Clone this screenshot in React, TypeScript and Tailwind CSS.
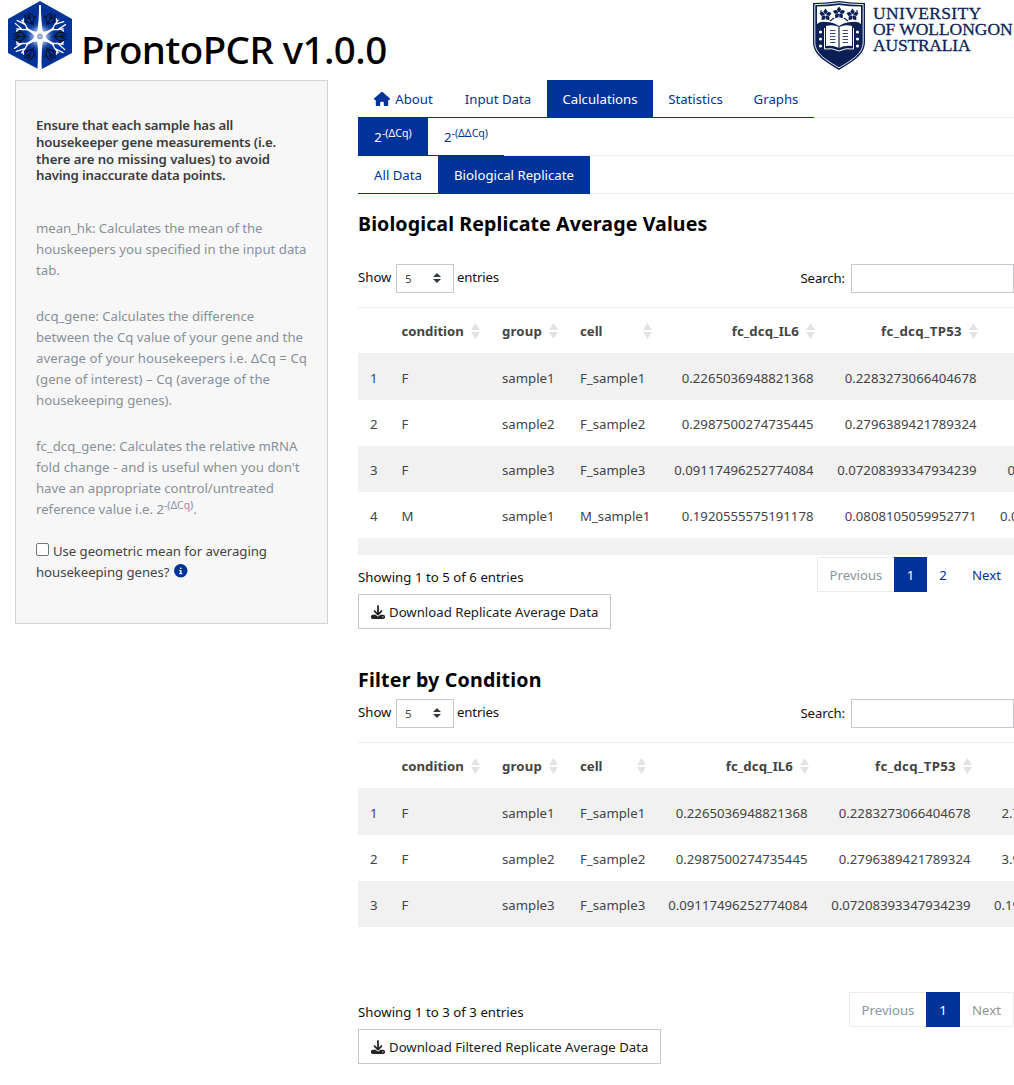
import React from "react";
import { FaHouse, FaDownload, FaCircleInfo } from "react-icons/fa6";

function HexLogo() {
  const dark = [30, 90, 150, 210, 270, 330];
  const white = [60, 120, 240, 300];
  return (
    <svg className="block h-[71px] w-[66px] shrink-0" viewBox="0 0 66 71">
      <defs>
        <radialGradient id="glow">
          <stop offset="0" stopColor="#c9d7f3" />
          <stop offset="0.5" stopColor="#6f90d3" />
          <stop offset="1" stopColor="#003399" stopOpacity="0" />
        </radialGradient>
      </defs>
      <path d="M33 1L65 19V53L33 70L1 53V19Z" fill="#003399" />
      {dark.map((a) => (
        <g key={a} transform={`translate(33 36.5) rotate(${a})`} fill="none" stroke="#06102f" strokeWidth="1.1">
          <path d="M0 -11V-26M0 -14L-4 -19V-24M0 -14L4 -19V-24M0 -20L-2.5 -24V-27M0 -20L2.5 -24V-27M-4 -19L-7 -20M4 -19L7 -20" />
        </g>
      ))}
      <circle cx="33" cy="36.5" r="16" fill="url(#glow)" />
      {white.map((a) => (
        <g key={a} transform={`translate(33 36.5) rotate(${a})`} fill="none" stroke="#fff" strokeWidth="1.3" strokeLinecap="round">
          <path d="M0 -3V-15" strokeWidth="2.4" />
          <path d="M0 -14L-3 -19L-5 -24M-3 -19L-1 -28M0 -14L3 -19L5 -24M3 -19L2.5 -28M-4 -22L-7 -23M4 -22L7 -23" />
        </g>
      ))}
      <g transform="translate(33 36.5)" fill="#fff">
        <path d="M-2.6 -6C-1.6 -14 -0.9 -22 -0.9 -31.5H0.9C0.9 -22 1.6 -14 2.6 -6Z" />
        <path d="M-2.6 5C-1.8 15 -2 26 -2.6 33.5L0 34.5L2 33C1 26 1.8 15 2.6 5Z" />
        <path d="M0 -10L3 -5L9 -5L5.5 0L9 5.5L3 5L0 11L-3 5L-9 5.5L-5.5 0L-9 -5L-3 -5Z" />
      </g>
      <circle cx="33" cy="36.5" r="2.4" fill="#a9bbe2" stroke="#7892cc" />
    </svg>
  );
}

function Flower({ x, y }: { x: number; y: number }) {
  return (
    <g transform={`translate(${x} ${y})`} fill="#0c1f55">
      {[0, 72, 144, 216, 288].map((a) => (
        <path key={a} d="M0 0L-2.2 -3.6L0 -6.4L2.2 -3.6Z" transform={`rotate(${a})`} />
      ))}
      <circle r="1" fill="#fff" />
    </g>
  );
}

function Shield() {
  return (
    <svg className="block h-[71px] w-[54px] shrink-0" viewBox="0 0 54 71">
      <path d="M1 3Q14 3 27 1Q40 3 53 3V42C53 55 40 62 27 70C14 62 1 55 1 42Z" fill="#0c1f55" />
      <path d="M2.8 4.6Q15 4.6 27 2.8Q39 4.6 51.2 4.6V42C51.2 54 39 60.5 27 67.8C15 60.5 2.8 54 2.8 42Z" fill="none" stroke="#fff" strokeWidth="0.9" />
      <path d="M5 6.5Q16 6.5 27 5Q38 6.5 49 6.5V24Q46 21 40 22Q33 22 27 26Q21 22 14 22Q8 21 5 24Z" fill="#fff" />
      <Flower x={13.5} y={15} />
      <Flower x={27} y={13} />
      <Flower x={40.5} y={15} />
      <path d="M9 13V10M18 21L22 18M45 13V10M36 21L32 18" stroke="#0c1f55" strokeWidth="1.2" />
      <path d="M14 26Q21 24 27 27Q33 24 40 26V46Q33 45 27 48Q21 45 14 46Z" fill="#fff" />
      <path d="M12.5 28V49Q20 47.5 27 51Q34 47.5 41.5 49V28" fill="none" stroke="#fff" strokeWidth="1" />
      <path d="M27 27V48" stroke="#0c1f55" strokeWidth="1.2" />
      <path d="M18 30.5H23.5M18 33.5H23.5M18 36.5H23.5M18 39.5H23.5M18 42.5H23.5M30.5 30.5H36M30.5 33.5H36M30.5 36.5H36M30.5 39.5H36M30.5 42.5H36" stroke="#0c1f55" strokeWidth="0.8" />
      <g fill="#fff">
        <circle cx="8.5" cy="32" r="1.6" /><circle cx="8.5" cy="39" r="1.6" /><circle cx="8.5" cy="46" r="1.6" />
        <circle cx="45.5" cy="32" r="1.6" /><circle cx="45.5" cy="39" r="1.6" /><circle cx="45.5" cy="46" r="1.6" />
      </g>
    </svg>
  );
}

function SortIcon() {
  return (
    <svg className="h-4 w-[9px] shrink-0" viewBox="0 0 9 16" fill="#e3e3e3">
      <path d="M4.5 0L9 7H0ZM4.5 16L0 9H9Z" />
    </svg>
  );
}

function Tab({ width, active, children }: { width: string; active?: boolean; children: React.ReactNode }) {
  return (
    <div className={`flex h-[38px] items-center justify-center whitespace-nowrap border-b border-[#003399] pt-[2px] ${width} ${active ? "bg-[#003399] text-white" : "text-[#003399]"}`}>
      {children}
    </div>
  );
}

function TableControls() {
  return (
    <div className="flex h-[29px] items-center">
      <span className="w-[38px] pb-[2px]">Show</span>
      <div className="flex h-[29px] w-[58px] items-center justify-between border border-[#c8c8cc] pl-2 pr-3 text-[11.5px] text-[#444]">
        <span>5</span>
        <svg className="mb-[2px] h-[10px] w-[8px]" viewBox="0 0 8 10" fill="#343a40"><path d="M4 0L8 4H0ZM4 10L0 6H8Z" /></svg>
      </div>
      <span className="ml-[3px] pb-[2px] tracking-[-0.15px]">entries</span>
      <span className="ml-auto mr-[6px] tracking-[-0.1px]">Search:</span>
      <div className="h-[29px] w-[163px] border border-[#c8c8cc]" />
    </div>
  );
}

type Row = [string, string, string, string, string, string, string];

function DataTable({ cols, rows, height }: { cols: string; rows: Row[]; height: string }) {
  return (
    <div className={`overflow-hidden border-t border-[#ececec] text-[#444] ${height}`}>
      <div className={`grid h-[45px] items-center pt-[1px] font-bold ${cols}`}>
        <span />
        <div className="flex items-center justify-between pl-[11.5px] pr-[10px]"><span>condition</span><SortIcon /></div>
        <div className="flex items-center justify-between pl-3 pr-[10px]"><span className="tracking-[0.2px]">group</span><SortIcon /></div>
        <div className="flex items-center justify-between pl-3 pr-[11px]"><span>cell</span><SortIcon /></div>
        <div className="flex items-center justify-end gap-[7px] pr-[11px]"><span className="tracking-[0.1px]">fc_dcq_IL6</span><SortIcon /></div>
        <div className="flex items-center justify-end gap-[7px] pr-[11px]"><span className="tracking-[0.35px]">fc_dcq_TP53</span><SortIcon /></div>
        <span />
      </div>
      <div className="border-t border-[#f1f1f1]">
        {rows.map((r, i) => (
          <div key={r[0]} className={`grid h-[46px] items-center whitespace-nowrap pt-[2px] ${cols} ${i % 2 === 0 ? "bg-[#f1f1f1]" : "bg-white"}`}>
            <span className="pl-3">{r[0]}</span>
            <span className="pl-[11.5px]">{r[1]}</span>
            <span className="pl-3">{r[2]}</span>
            <span className="pl-3">{r[3]}</span>
            <span className="pr-[12.5px] text-right">{r[4]}</span>
            <span className="pr-[12.5px] text-right">{r[5]}</span>
            <span className="text-right">{r[6]}</span>
          </div>
        ))}
      </div>
    </div>
  );
}

function DownloadButton({ width, children }: { width: string; children: React.ReactNode }) {
  return (
    <button className={`flex h-[35px] items-center gap-1 whitespace-nowrap border border-[#c8c8c8] pl-3 pt-[1px] text-[#222] ${width}`}>
      <FaDownload className="size-[14px] shrink-0" />
      <span>{children}</span>
    </button>
  );
}

const rowsA: Row[] = [
  ["1", "F", "sample1", "F_sample1", "0.2265036948821368", "0.2283273066404678", ""],
  ["2", "F", "sample2", "F_sample2", "0.2987500274735445", "0.2796389421789324", ""],
  ["3", "F", "sample3", "F_sample3", "0.09117496252774084", "0.07208393347934239", "0.1938271654"],
  ["4", "M", "sample1", "M_sample1", "0.1920555575191178", "0.0808105059952771", "0.08213716542"],
  ["", "", "", "", "", "", ""],
];

const rowsB: Row[] = [
  ["1", "F", "sample1", "F_sample1", "0.2265036948821368", "0.2283273066404678", "2.7403918265"],
  ["2", "F", "sample2", "F_sample2", "0.2987500274735445", "0.2796389421789324", "3.9103846152"],
  ["3", "F", "sample3", "F_sample3", "0.09117496252774084", "0.07208393347934239", "0.19382716542"],
];

export default function App() {
  return (
    <div className="h-[1085px] w-[1014px] overflow-hidden bg-white font-['Noto_Sans',sans-serif] text-[13.2px] leading-[21px] text-[#111]">
      <header className="flex h-[80px] items-start justify-between">
        <div className="flex pl-[7px]">
          <HexLogo />
          <h1 className="ml-2 mt-[19px] whitespace-nowrap text-[38.5px] font-medium leading-[60px] tracking-[-0.55px] text-black">ProntoPCR v1.0.0</h1>
        </div>
        <div className="flex w-[202px] shrink-0 overflow-hidden">
          <Shield />
          <div className="ml-[7px] mt-[5px] whitespace-nowrap font-['Liberation_Serif',serif] text-[17.5px] leading-[16px] text-[#0c1f55] [-webkit-text-stroke:0.3px_#0c1f55]">
            <div className="tracking-[0.35px]">UNIVERSITY</div>
            <div className="tracking-[-0.05px]">OF WOLLONGON</div>
            <div className="tracking-[-0.2px]">AUSTRALIA</div>
          </div>
        </div>
      </header>
      <div className="flex">
        <aside className="ml-[15px] mr-[30px] h-[544px] w-[313px] shrink-0 whitespace-nowrap border border-[#d3d3d3] bg-[#f7f7f7] pl-5 pt-[36px] text-[#87919a]">
          <p className="font-semibold leading-[16.8px] tracking-[-0.18px] text-[#3c3c3c]">
            Ensure that each sample has all<br />housekeeper gene measurements (i.e.<br /><span className="tracking-[-0.07px]">there are no missing values) to avoid</span><br />having inaccurate data points.
          </p>
          <p className="mt-[34px]"><span className="tracking-[-0.06px]">mean_hk: Calculates the mean of the</span><br />houskeepers you specified in the input data<br />tab.</p>
          <p className="mt-[25px]"><span className="tracking-[-0.03px]">dcq_gene: Calculates the difference</span><br />between the Cq value of your gene and the<br /><span className="tracking-[0.06px]">average of your housekeepers i.e. ΔCq = Cq</span><br /><span className="tracking-[0.04px]">(gene of interest) – Cq (average of the</span><br />housekeeping genes).</p>
          <p className="mt-[25px]">fc_dcq_gene: Calculates the relative mRNA<br /><span className="tracking-[0.05px]">fold change - and is useful when you don't</span><br /><span className="tracking-[-0.03px]">have an appropriate control/untreated</span><br />reference value i.e. 2<sup className="text-[10.4px]">-(ΔCq)</sup>.</p>
          <div className="mt-[21px] tracking-[-0.05px] text-[#444]">
            <div className="flex items-center"><span className="mb-[4px] mr-1 size-[13px] rounded-[2px] border border-[#767676] bg-white" />Use geometric mean for averaging</div>
            <div className="flex items-center">housekeeping genes?<FaCircleInfo className="mb-[3px] ml-[5px] size-[13.5px] shrink-0 text-[#003399]" /></div>
          </div>
        </aside>
        <main className="w-[656px] shrink-0">
          <nav>
            <div className="flex h-[38px]">
              <Tab width="w-[91px]"><FaHouse className="mb-[2px] mr-[5px] size-[16px]" />About</Tab>
              <Tab width="w-[98px]">Input Data</Tab>
              <Tab width="w-[106px]" active>Calculations</Tab>
              <Tab width="w-[85px]">Statistics</Tab>
              <Tab width="w-[76px]">Graphs</Tab>
              <div className="flex-1 border-b border-[#ececec]" />
            </div>
            <div className="flex h-[38px]">
              <Tab width="w-[70px]" active><span>2<sup className="text-[10.6px]">-(ΔCq)</sup></span></Tab>
              <Tab width="w-[76px]"><span>2<sup className="text-[10.6px]">-(ΔΔCq)</sup></span></Tab>
              <div className="flex-1 border-b border-[#ececec]" />
            </div>
            <div className="flex h-[38px]">
              <Tab width="w-[80px]">All Data</Tab>
              <Tab width="w-[152px]" active>Biological Replicate</Tab>
              <div className="flex-1 border-b border-[#ececec]" />
            </div>
          </nav>
          <section>
            <h2 className="mt-[18px] h-[24px] whitespace-nowrap text-[19.6px] font-bold leading-[24px] tracking-[0.1px] text-black">Biological Replicate Average Values</h2>
            <div className="mt-[28px]"><TableControls /></div>
            <div className="mt-[14px]">
              <DataTable cols="grid-cols-[32px_100px_78px_95px_163px_163px_105px]" rows={rowsA} height="h-[248px]" />
            </div>
            <div className="mt-[2px] flex h-[35px] justify-between">
              <span className="pt-[10px] tracking-[0.04px]">Showing 1 to 5 of 6 entries</span>
              <div className="flex text-[#003399]">
                <span className="flex w-[77px] items-center justify-center border border-r-0 border-[#ececec] pt-[2px] text-[#8d959d]">Previous</span>
                <span className="flex w-[33px] items-center justify-center bg-[#003399] pt-[2px] text-white">1</span>
                <span className="flex w-[32px] items-center justify-center pt-[2px]">2</span>
                <span className="flex w-[55px] items-center justify-center pt-[2px]">Next</span>
              </div>
            </div>
            <div className="mt-[2px]"><DownloadButton width="w-[253px]">Download Replicate Average Data</DownloadButton></div>
          </section>
          <section className="mt-[39px]">
            <h2 className="h-[24px] whitespace-nowrap text-[19.6px] font-bold leading-[24px] tracking-[0.2px] text-black">Filter by Condition</h2>
            <div className="mt-[7px]"><TableControls /></div>
            <div className="mt-[14px]">
              <DataTable cols="grid-cols-[32px_100px_78px_89px_163px_163px_105px]" rows={rowsB} height="h-[248px]" />
            </div>
            <div className="mt-[2px] flex h-[35px] justify-between">
              <span className="pt-[10px] tracking-[0.04px]">Showing 1 to 3 of 3 entries</span>
              <div className="flex text-[#8d959d]">
                <span className="flex w-[77px] items-center justify-center border border-r-0 border-[#ececec] pt-[2px]">Previous</span>
                <span className="flex w-[34px] items-center justify-center bg-[#003399] pt-[2px] text-white">1</span>
                <span className="flex w-[54px] items-center justify-center border border-l-0 border-[#ececec] pt-[2px]">Next</span>
              </div>
            </div>
            <div className="mt-[2px]"><DownloadButton width="w-[303px]">Download Filtered Replicate Average Data</DownloadButton></div>
          </section>
        </main>
      </div>
    </div>
  );
}
